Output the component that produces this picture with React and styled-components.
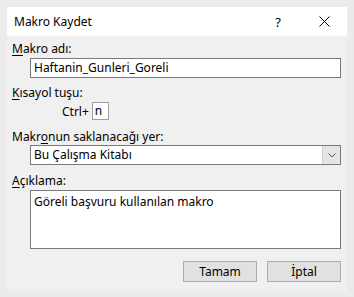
import React from 'react'
import styled, { createGlobalStyle } from 'styled-components'

const Global = createGlobalStyle`
  html, body {
    margin: 0;
    background: #ebebeb;
  }
  body {
    font-family: "Noto Sans", "Liberation Sans", sans-serif;
    font-size: 12px;
    color: #000;
  }
`

const Frame = styled.div`
  padding: 7px;
  width: 354px;
  height: 297px;
  box-sizing: border-box;
`

const Dialog = styled.div`
  width: 340px;
  background: #f0f0f0;
`

const TitleBar = styled.div`
  height: 29px;
  background: #fff;
  display: flex;
  align-items: center;
  padding-left: 7px;
`

const Title = styled.div`
  flex: 1;
  font-size: 12px;
`

const Help = styled.div`
  width: 46px;
  text-align: center;
  font-size: 13px;
`

const Close = styled.div`
  width: 46px;
  display: flex;
  justify-content: center;
  align-items: center;
`

const Body = styled.div`
  padding: 5px 6px 9px 5px;
`

const Label = styled.div`
  line-height: 16px;
  margin-top: ${p => p.$top || 0}px;
`

const Key = styled.span`
  text-decoration: underline;
  text-underline-offset: 2px;
`

const TextBox = styled.div`
  margin: ${p => p.$top || 0}px 0 0 18px;
  height: ${p => p.$h || 20}px;
  box-sizing: border-box;
  border: 1px solid #7a7a7a;
  background: #fff;
  padding: ${p => p.$pad || '1px 3px'};
  line-height: 16px;
`

const ShortcutRow = styled.div`
  display: flex;
  align-items: center;
  margin-top: 1px;
  padding-left: 50px;
  gap: 3px;
`

const KeyBox = styled.div`
  width: 17px;
  height: 18px;
  box-sizing: border-box;
  border: 1px solid #a0a0a0;
  background: #fff;
  line-height: 16px;
  padding-left: 2px;
`

const Select = styled.div`
  margin-left: 18px;
  height: 20px;
  box-sizing: border-box;
  border: 1px solid #7a7a7a;
  background: #fff;
  display: flex;
`

const SelectText = styled.div`
  flex: 1;
  padding: 1px 3px;
  line-height: 16px;
`

const Arrow = styled.div`
  width: 17px;
  background: #e5e5e5;
  border-left: 1px solid #d0d0d0;
  display: flex;
  align-items: center;
  justify-content: center;
`

const Buttons = styled.div`
  display: flex;
  justify-content: flex-end;
  gap: 10px;
  margin-top: 12px;
`

const Button = styled.div`
  width: 74px;
  height: 21px;
  box-sizing: border-box;
  border: 1px solid #adadad;
  background: #e1e1e1;
  display: flex;
  align-items: center;
  justify-content: center;
`

export default function App() {
  return (
    <Frame>
      <Global />
      <Dialog>
        <TitleBar>
          <Title>Makro Kaydet</Title>
          <Help>?</Help>
          <Close>
            <svg width="11" height="11" viewBox="0 0 11 11">
              <path d="M0.5 0.5 L10.5 10.5 M10.5 0.5 L0.5 10.5" stroke="#000" strokeWidth="1" />
            </svg>
          </Close>
        </TitleBar>
        <Body>
          <Label><Key>M</Key>akro adı:</Label>
          <TextBox $top={1}>Haftanin_Gunleri_Goreli</TextBox>

          <Label $top={7}><Key>K</Key>ısayol tuşu:</Label>
          <ShortcutRow>
            <span>Ctrl+</span>
            <KeyBox>n</KeyBox>
          </ShortcutRow>

          <Label $top={9}>Makr<Key>o</Key>nun saklanacağı yer:</Label>
          <Select>
            <SelectText>Bu Çalışma Kitabı</SelectText>
            <Arrow>
              <svg width="8" height="5" viewBox="0 0 8 5">
                <path d="M0.5 0.5 L4 4 L7.5 0.5" fill="none" stroke="#555" strokeWidth="1" />
              </svg>
            </Arrow>
          </Select>

          <Label $top={8}><Key>A</Key>çıklama:</Label>
          <TextBox $top={1} $h={59} $pad="3px 3px">Göreli başvuru kullanılan makro</TextBox>

          <Buttons>
            <Button>Tamam</Button>
            <Button>İptal</Button>
          </Buttons>
        </Body>
      </Dialog>
    </Frame>
  )
}
